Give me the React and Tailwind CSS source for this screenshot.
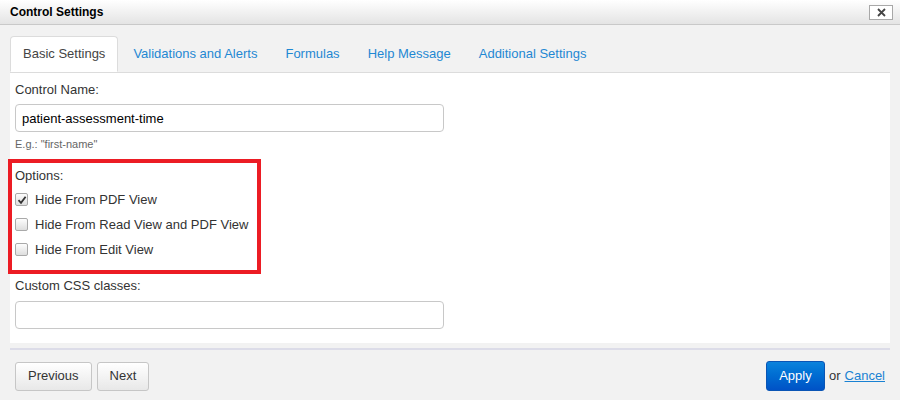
import React from 'react';

const tabs = ['Basic Settings', 'Validations and Alerts', 'Formulas', 'Help Message', 'Additional Settings'];

const Checkbox = ({ checked }) => (
  <span className="w-[13px] h-[13px] rounded-[2px] border border-[#a9a9a9] bg-gradient-to-b from-[#fdfdfd] to-[#dedede] flex items-center justify-center">
    {checked && (
      <svg width="10" height="10" viewBox="0 0 10 10">
        <path d="M1.5 5.2 L4 7.8 L8.6 1.8" fill="none" stroke="#333" strokeWidth="1.8" />
      </svg>
    )}
  </span>
);

const Option = ({ label, checked }) => (
  <label className="h-[25px] flex items-center gap-[7px] text-[13px] text-[#333]">
    <Checkbox checked={checked} />
    <span>{label}</span>
  </label>
);

const App = () => {
  return (
    <div className="w-[900px] h-[400px] bg-[#f2f2f2] font-['Liberation_Sans',Arial,sans-serif] overflow-hidden">
      <div className="h-[25px] bg-gradient-to-b from-white to-[#e4e4e4] border-b border-[#c9c9c9] flex items-center justify-between pl-[10px] pr-[7px]">
        <span className="text-[12px] font-bold text-black">Control Settings</span>
        <button className="w-[24px] h-[15px] bg-white border border-[#a8a8a8] flex items-center justify-center">
          <svg width="9" height="9" viewBox="0 0 9 9">
            <path d="M1 1 L8 8 M8 1 L1 8" stroke="#444" strokeWidth="1.8" />
          </svg>
        </button>
      </div>

      <div className="pt-[11px] px-[10px]">
        <div className="flex gap-[2px] border-b border-[#dcdcdc]">
          {tabs.map((t, i) => (
            <div
              key={t}
              className={
                i === 0
                  ? 'h-[36px] px-[12px] flex items-center text-[13px] text-[#444] bg-white border border-[#dcdcdc] border-b-white rounded-t-[4px] -mb-px'
                  : 'h-[36px] px-[12px] flex items-center text-[13px] text-[#1f88d3] border border-transparent'
              }
            >
              {t}
            </div>
          ))}
        </div>

        <div className="bg-white px-[5px] pt-[9px] pb-[14px]">
          <div className="text-[13px] leading-[15px] text-[#333]">Control Name:</div>
          <input
            type="text"
            defaultValue="patient-assessment-time"
            className="mt-[7px] w-[429px] h-[28px] border border-[#c8c8c8] rounded-[4px] px-[6px] text-[13px] text-black outline-none"
          />
          <div className="mt-[6px] text-[11px] leading-[13px] text-[#666]">E.g.: "first-name"</div>

          <div className="relative mt-[17px]">
            <div className="absolute -left-[7px] -top-[9px] w-[253px] h-[115px] border-[4px] border-[#ec1c24] pointer-events-none" />
            <div className="text-[13px] leading-[15px] text-[#333]">Options:</div>
            <div className="mt-[4px] flex flex-col">
              <Option label="Hide From PDF View" checked />
              <Option label="Hide From Read View and PDF View" />
              <Option label="Hide From Edit View" />
            </div>
          </div>

          <div className="mt-[16px] text-[13px] leading-[15px] text-[#333]">Custom CSS classes:</div>
          <input
            type="text"
            className="mt-[8px] w-[429px] h-[28px] border border-[#c8c8c8] rounded-[4px] px-[6px] text-[13px] outline-none"
          />
        </div>

        <div className="mt-[5px] h-[2px] bg-[#dcdce8]" />

        <div className="mt-[11px] flex items-center justify-between pl-[5px] pr-[5px]">
          <div className="flex gap-[5px]">
            <button className="h-[29px] px-[12px] text-[13px] text-[#333] bg-gradient-to-b from-white to-[#e8e8e8] border border-[#c6c6c6] rounded-[3px]">
              Previous
            </button>
            <button className="h-[29px] px-[12px] text-[13px] text-[#333] bg-gradient-to-b from-white to-[#e8e8e8] border border-[#c6c6c6] rounded-[3px]">
              Next
            </button>
          </div>
          <div className="flex items-center gap-[4px] text-[13px]">
            <button className="h-[30px] w-[59px] text-[13px] text-white bg-gradient-to-b from-[#0c83dc] to-[#0052c6] border border-[#0a55b5] rounded-[3px]">
              Apply
            </button>
            <span className="text-[#333]">or</span>
            <a className="text-[#1a82d3] underline">Cancel</a>
          </div>
        </div>
      </div>
    </div>
  );
};

export default App;
